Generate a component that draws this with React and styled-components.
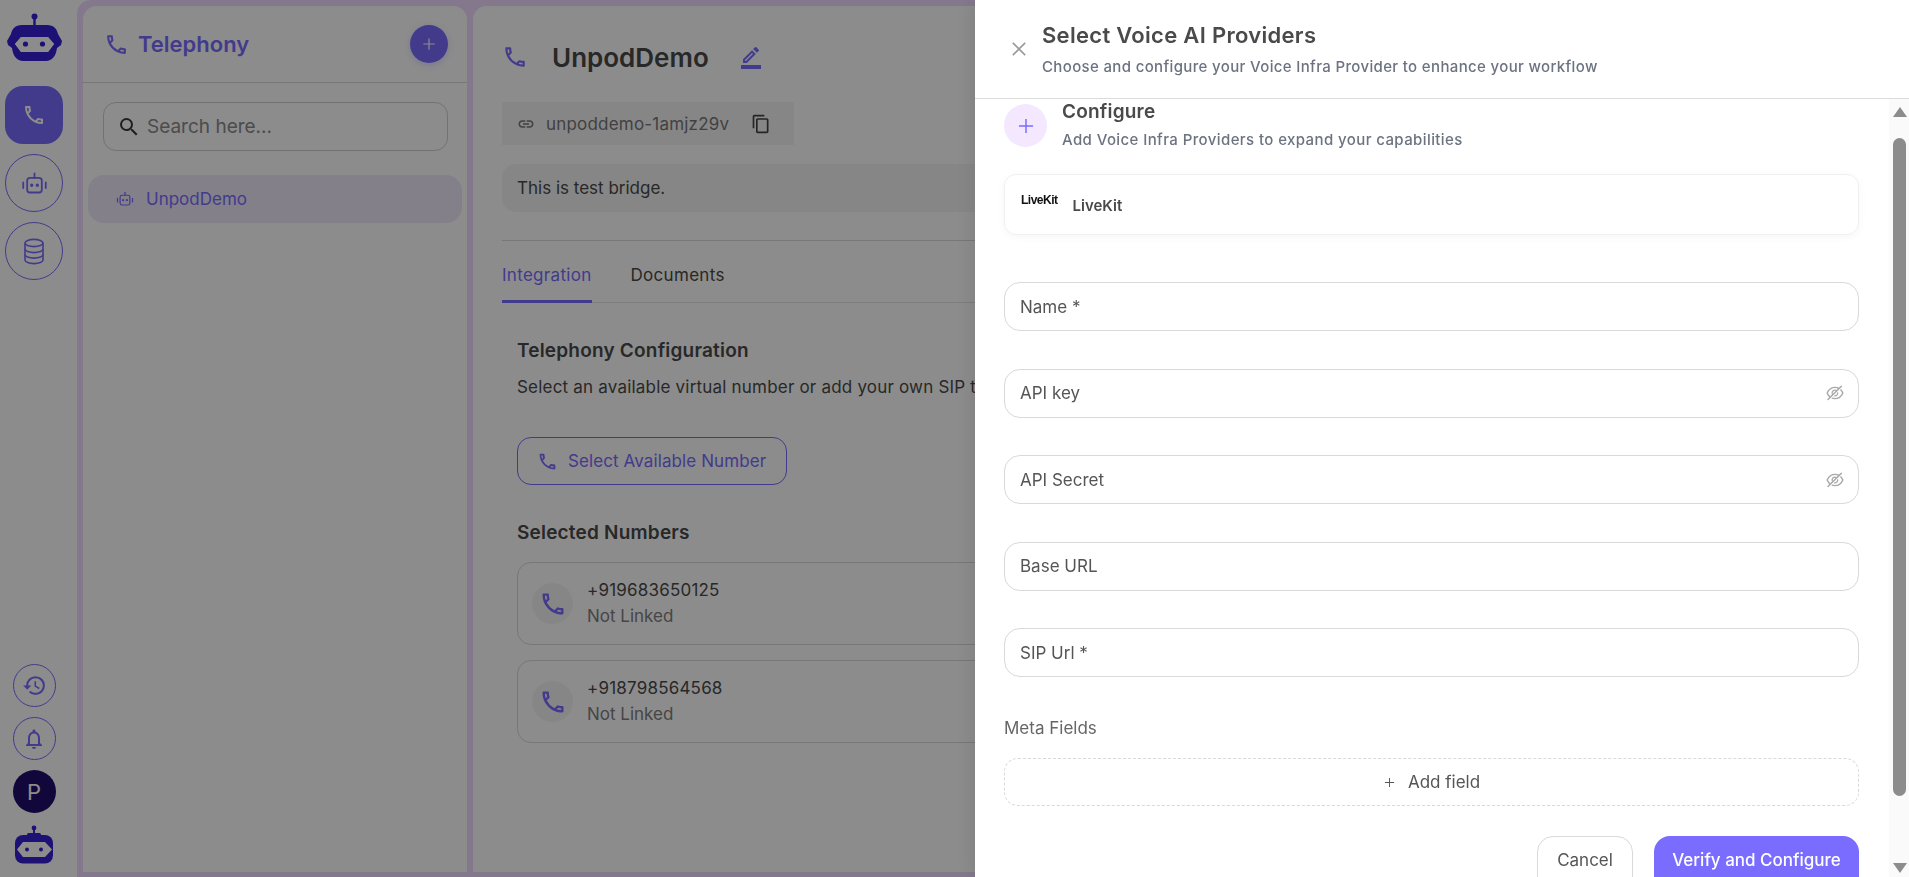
import React from 'react';
import styled, { createGlobalStyle } from 'styled-components';
import {
  MdOutlinePhone,
  MdOutlineHistory,
  MdOutlineNotifications,
  MdSearch,
  MdOutlineBorderColor,
  MdOutlineLink,
  MdOutlineContentCopy,
} from 'react-icons/md';
import { AiOutlineClose, AiOutlinePlus, AiOutlineEyeInvisible } from 'react-icons/ai';

const primary = '#796cff';
const heading = '#4a4a4a';
const logoBlue = '#3620d8';

const GlobalStyle = createGlobalStyle`
  html, body {
    margin: 0;
    height: 100%;
    overflow: hidden;
    font-family: Inter, "Noto Sans", sans-serif;
    color: ${heading};
    background: #fff;
  }
  * { box-sizing: border-box; }
`;

const Page = styled.div`
  display: flex;
  width: 1909px;
  height: 877px;
`;

const Sidebar = styled.aside`
  width: 77px;
  flex: none;
  display: flex;
  flex-direction: column;
  align-items: center;
  padding: 13px 14px 13px 5px;
`;

const NavGroup = styled.nav`
  display: flex;
  flex-direction: column;
  align-items: center;
  gap: 10px;
  margin-top: ${p => p.$top || 0}px;
`;

const BottomGroup = styled(NavGroup)`
  margin-top: auto;
`;

const NavButton = styled.button`
  width: ${p => p.$size || 58}px;
  height: ${p => p.$size || 58}px;
  padding: 0;
  display: flex;
  align-items: center;
  justify-content: center;
  color: ${p => (p.$active ? '#fff' : primary)};
  background: ${p => (p.$active ? primary : '#fff')};
  border: ${p => (p.$active ? 'none' : `1px solid ${primary}`)};
  border-radius: ${p => (p.$active ? '18px' : '50%')};
`;

const Avatar = styled.div`
  width: 43px;
  height: 43px;
  margin-bottom: 2px;
  border-radius: 50%;
  background: #220d6b;
  color: #fff;
  font-size: 22px;
  display: flex;
  align-items: center;
  justify-content: center;
`;

const Frame = styled.main`
  flex: 1;
  min-width: 0;
  display: flex;
  gap: 6px;
  padding: 6px 6px 5px;
  background: #f1dcff;
  border-top-left-radius: 14px;
`;

const ListPanel = styled.section`
  width: 384px;
  flex: none;
  background: #fff;
  border-radius: 14px 14px 0 0;
`;

const ListHeader = styled.header`
  height: 77px;
  display: flex;
  align-items: center;
  justify-content: space-between;
  padding: 0 19px 0 21px;
  border-bottom: 1px solid #d9d9d9;
`;

const ListTitle = styled.h2`
  margin: 0;
  display: flex;
  align-items: center;
  gap: 9px;
  font-size: 22px;
  font-weight: 600;
  color: ${primary};
`;

const RoundAdd = styled.button`
  width: 38px;
  height: 38px;
  padding: 0;
  border: none;
  border-radius: 50%;
  background: ${primary};
  color: #fff;
  display: flex;
  align-items: center;
  justify-content: center;
  box-shadow: 0 2px 6px rgba(121, 108, 255, 0.25);
`;

const SearchBox = styled.div`
  height: 49px;
  margin: 19px 19px 24px 20px;
  padding: 0 13px;
  display: flex;
  align-items: center;
  gap: 6px;
  border: 1px solid #cfcfcf;
  border-radius: 13px;
  color: #3a3a3a;
  font-size: 19px;
  span { color: #8a8a8a; }
`;

const ListItem = styled.div`
  height: 48px;
  margin: 0 5px;
  padding-left: 28px;
  display: flex;
  align-items: center;
  gap: 12px;
  border-radius: 16px;
  background: #efe9fb;
  color: ${primary};
  font-size: 17px;
`;

const DetailPanel = styled.section`
  flex: 1;
  min-width: 0;
  padding: 0 30px 0 29px;
  background: #fff;
  border-radius: 14px 14px 0 0;
`;

const DetailTop = styled.div`
  height: 96px;
  padding-top: 6px;
  display: flex;
  align-items: center;
  color: ${primary};
`;

const DetailName = styled.h1`
  margin: 0 30px 0 24px;
  font-size: 26px;
  font-weight: 600;
  color: ${heading};
`;

const SlugChip = styled.div`
  width: 292px;
  height: 43px;
  padding: 0 15px;
  display: flex;
  align-items: center;
  background: #f5f5f5;
  color: #777;
  font-size: 17px;
  letter-spacing: 0.2px;
  gap: 11px;
  svg:last-child { margin-left: 11px; color: #444; }
`;

const Description = styled.div`
  height: 48px;
  margin-top: 19px;
  padding-left: 15px;
  display: flex;
  align-items: center;
  border-radius: 14px;
  background: #f5f5f5;
  font-size: 17px;
`;

const Tabs = styled.div`
  margin-top: 28px;
  height: 63px;
  display: flex;
  gap: 39px;
  border-top: 1px solid #d9d9d9;
  border-bottom: 1px solid #e3e3e3;
`;

const Tab = styled.div`
  display: flex;
  align-items: center;
  font-size: 17px;
  letter-spacing: 0.3px;
  padding-top: ${p => (p.$active ? 8 : 5)}px;
  color: ${p => (p.$active ? primary : heading)};
  border-bottom: ${p => (p.$active ? `3px solid ${primary}` : 'none')};
  margin-bottom: -1px;
`;

const Section = styled.div`
  padding: 36px 0 0 15px;
`;

const SectionTitle = styled.h3`
  margin: ${p => p.$top || 0}px 0 0;
  font-size: 19px;
  line-height: 24px;
  font-weight: 600;
  letter-spacing: 0.2px;
  color: ${heading};
`;

const SectionText = styled.p`
  margin: 12px 0 0;
  font-size: 17px;
  line-height: 24px;
  letter-spacing: 0.2px;
  white-space: nowrap;
`;

const OutlineButton = styled.button`
  width: 270px;
  height: 48px;
  margin-top: 38px;
  padding: 0 0 0 19px;
  display: flex;
  align-items: center;
  gap: 10px;
  background: #fff;
  border: 1px solid ${primary};
  border-radius: 14px;
  color: ${primary};
  font: inherit;
  font-size: 17px;
  letter-spacing: 0.1px;
`;

const NumberCard = styled.div`
  height: 83px;
  margin-top: ${p => p.$top}px;
  padding-left: 14px;
  display: flex;
  align-items: center;
  gap: 14px;
  border: 1px solid #d9d9d9;
  border-radius: 14px;
`;

const NumberIcon = styled.div`
  width: 41px;
  height: 41px;
  border-radius: 50%;
  background: #f5f5f5;
  color: ${primary};
  display: flex;
  align-items: center;
  justify-content: center;
`;

const NumberValue = styled.div`
  font-size: 17px;
  line-height: 25px;
  letter-spacing: 0.2px;
`;

const NumberState = styled.div`
  font-size: 17px;
  line-height: 26px;
  color: #808080;
`;

const Overlay = styled.div`
  position: fixed;
  inset: 0;
  background: rgba(0, 0, 0, 0.45);
`;

const Drawer = styled.aside`
  position: fixed;
  top: 0;
  right: 0;
  bottom: 0;
  width: 934px;
  display: flex;
  flex-direction: column;
  background: #fff;
  box-shadow: -6px 0 16px rgba(0, 0, 0, 0.08);
`;

const DrawerHeader = styled.header`
  height: 99px;
  flex: none;
  display: flex;
  align-items: center;
  gap: 13px;
  padding: 0 0 1px 34px;
  border-bottom: 1px solid #dcdcdc;
  color: #9a9a9a;
`;

const DrawerTitle = styled.h2`
  margin: 0 0 8px;
  font-size: 22px;
  line-height: 28px;
  font-weight: 600;
  letter-spacing: 0.3px;
  color: ${heading};
`;

const DrawerSub = styled.p`
  margin: 0;
  font-size: 15px;
  line-height: 20px;
  font-weight: 500;
  letter-spacing: 0.35px;
  color: #6b7280;
`;

const DrawerBody = styled.div`
  flex: 1;
  min-height: 0;
  display: flex;
  overflow: hidden;
`;

const DrawerContent = styled.div`
  flex: 1;
  min-width: 0;
  padding: 5px 30px 0 29px;
`;

const ConfigureRow = styled.div`
  display: flex;
  gap: 15px;
  height: 43px;
`;

const AddCircle = styled.div`
  width: 43px;
  height: 43px;
  flex: none;
  border-radius: 50%;
  background: #f3e8ff;
  color: ${primary};
  display: flex;
  align-items: center;
  justify-content: center;
`;

const ConfigureTitle = styled.h3`
  margin: -4px 0 0;
  font-size: 19px;
  line-height: 24px;
  font-weight: 600;
  letter-spacing: 0.2px;
  color: ${heading};
`;

const ConfigureSub = styled.p`
  margin: 6px 0 0;
  font-size: 15px;
  line-height: 20px;
  font-weight: 500;
  letter-spacing: 0.4px;
  color: #6b7280;
`;

const ProviderCard = styled.div`
  height: 61px;
  margin-top: 27px;
  padding-left: 16px;
  display: flex;
  align-items: center;
  gap: 15px;
  border: 1px solid #f0f0f0;
  border-radius: 12px;
  box-shadow: 0 2px 8px rgba(0, 0, 0, 0.04);
`;

const ProviderLogo = styled.span`
  margin-top: -10px;
  font-family: "Liberation Sans", sans-serif;
  font-size: 12px;
  font-weight: 700;
  letter-spacing: -0.5px;
  color: #111;
`;

const ProviderName = styled.span`
  margin-top: 2px;
  font-size: 15px;
  font-weight: 600;
  color: ${heading};
`;

const Form = styled.div`
  margin-top: 47px;
  display: flex;
  flex-direction: column;
  gap: 37.5px;
`;

const Field = styled.div`
  height: 49px;
  padding: 0 13px 0 15px;
  display: flex;
  align-items: center;
  justify-content: space-between;
  border: 1px solid #d9d9d9;
  border-radius: 16px;
  font-size: 17px;
  color: #555;
  svg { color: #a8a8a8; }
`;

const MetaLabel = styled.div`
  margin-top: 40px;
  font-size: 17px;
  line-height: 22px;
  color: #666;
`;

const AddField = styled.div`
  height: 48px;
  margin-top: 19px;
  display: flex;
  align-items: center;
  justify-content: center;
  gap: 12px;
  border: 1px dashed #d9d9d9;
  border-radius: 14px;
  font-size: 17px;
  color: #555;
`;

const Footer = styled.div`
  margin-top: 30px;
  display: flex;
  justify-content: flex-end;
  gap: 21px;
`;

const FooterButton = styled.button`
  width: ${p => p.$width}px;
  height: 48px;
  padding: 0;
  font: inherit;
  font-size: 17px;
  font-weight: ${p => (p.$primary ? 500 : 400)};
  color: ${p => (p.$primary ? '#fff' : '#555')};
  background: ${p => (p.$primary ? primary : '#fff')};
  border: ${p => (p.$primary ? 'none' : '1px solid #d9d9d9')};
  border-radius: 16px 16px 0 0;
`;

const Scrollbar = styled.div`
  width: 20px;
  flex: none;
  padding: 0 3px 0 4px;
  display: flex;
  flex-direction: column;
  align-items: center;
  background: #fafafa;
`;

const ScrollArrow = styled.div`
  width: 0;
  height: 0;
  flex: none;
  margin-top: ${p => p.$top}px;
  border-left: 7px solid transparent;
  border-right: 7px solid transparent;
  border-${p => (p.$down ? 'top' : 'bottom')}: 10px solid #8c8c8c;
`;

const ScrollThumb = styled.div`
  width: 13px;
  height: 658px;
  flex: none;
  margin-top: 21px;
  border-radius: 7px;
  background: #8c8c8c;
`;

// rail logo at the top, wide head with pointed sides
const BotLogo = () => (
  <svg width="55" height="48" viewBox="0 0 55 48" fill={logoBlue}>
    <circle cx="27.5" cy="3.5" r="3" />
    <rect x="26.3" y="5" width="2.4" height="9" />
    <path fillRule="evenodd" d="M15 12h25c7 0 10 4 11 9l4 7-1 4-4 3c-1 8-5 13-11 13H16c-6 0-10-5-11-13l-4-3-1-4 4-7c1-5 4-9 11-9zM14 24l-6 7 6 8h27l6-8-6-7z" />
    <path d="M14 24h27l6 7-6 8H14l-6-8z" fill="#fff" />
    <circle cx="18.5" cy="31" r="2.6" />
    <circle cx="35.5" cy="31" r="2.6" />
  </svg>
);

// rail logo at the bottom, squarer head
const BotMark = () => (
  <svg width="38" height="39" viewBox="0 0 38 39" fill={logoBlue}>
    <circle cx="19" cy="3" r="2.4" />
    <rect x="18" y="5" width="2" height="5" />
    <rect x="12" y="8" width="14" height="3" rx="1.5" />
    <rect x="0" y="10" width="38" height="28.5" rx="8" />
    <path d="M8 17h22l7 7.5-7 7.5H8l-6-7.5z" fill="#fff" />
    <circle cx="12" cy="24.5" r="2" />
    <circle cx="26" cy="24.5" r="2" />
  </svg>
);

const RobotIcon = ({ size }) => (
  <svg width={size} height={size} viewBox="0 0 24 24" fill="none" stroke="currentColor" strokeWidth="1.6" strokeLinecap="round">
    <path d="M12 3v4" />
    <rect x="5.5" y="7" width="13" height="13" rx="2.5" />
    <path d="M2 11v5M22 11v5" />
    <circle cx="9.5" cy="13.5" r="0.7" fill="currentColor" />
    <circle cx="14.5" cy="13.5" r="0.7" fill="currentColor" />
  </svg>
);

const DatabaseIcon = () => (
  <svg width="24" height="27" viewBox="0 0 24 27" fill="none" stroke="currentColor" strokeWidth="1.6">
    <ellipse cx="12" cy="5" rx="9" ry="3.6" />
    <path d="M3 5v17c0 2 4 3.6 9 3.6s9-1.6 9-3.6V5" />
    <path d="M3 11c0 2 4 3.6 9 3.6s9-1.6 9-3.6" />
    <path d="M3 16.5c0 2 4 3.6 9 3.6s9-1.6 9-3.6" />
  </svg>
);

const NumberRow = ({ number, top }) => (
  <NumberCard $top={top}>
    <NumberIcon><MdOutlinePhone size={28} /></NumberIcon>
    <div>
      <NumberValue>{number}</NumberValue>
      <NumberState>Not Linked</NumberState>
    </div>
  </NumberCard>
);

export default function App() {
  return (
    <>
      <GlobalStyle />
      <Page>
        <Sidebar>
          <BotLogo />
          <NavGroup $top={25}>
            <NavButton $active><MdOutlinePhone size={24} /></NavButton>
            <NavButton><RobotIcon size={27} /></NavButton>
            <NavButton><DatabaseIcon /></NavButton>
          </NavGroup>
          <BottomGroup>
            <NavButton $size={43}><MdOutlineHistory size={25} /></NavButton>
            <NavButton $size={43}><MdOutlineNotifications size={24} /></NavButton>
            <Avatar>P</Avatar>
            <BotMark />
          </BottomGroup>
        </Sidebar>
        <Frame>
          <ListPanel>
            <ListHeader>
              <ListTitle><MdOutlinePhone size={25} />Telephony</ListTitle>
              <RoundAdd><AiOutlinePlus size={16} /></RoundAdd>
            </ListHeader>
            <SearchBox><MdSearch size={24} /><span>Search here...</span></SearchBox>
            <ListItem><RobotIcon size={18} />UnpodDemo</ListItem>
          </ListPanel>
          <DetailPanel>
            <DetailTop>
              <MdOutlinePhone size={26} />
              <DetailName>UnpodDemo</DetailName>
              <MdOutlineBorderColor size={24} />
            </DetailTop>
            <SlugChip>
              <MdOutlineLink size={18} />
              unpoddemo-1amjz29v
              <MdOutlineContentCopy size={20} />
            </SlugChip>
            <Description>This is test bridge.</Description>
            <Tabs>
              <Tab $active>Integration</Tab>
              <Tab>Documents</Tab>
            </Tabs>
            <Section>
              <SectionTitle>Telephony Configuration</SectionTitle>
              <SectionText>Select an available virtual number or add your own SIP trunk</SectionText>
              <OutlineButton><MdOutlinePhone size={21} />Select Available Number</OutlineButton>
              <SectionTitle $top={36}>Selected Numbers</SectionTitle>
              <NumberRow number="+919683650125" top={17} />
              <NumberRow number="+918798564568" top={15} />
            </Section>
          </DetailPanel>
        </Frame>
      </Page>
      <Overlay />
      <Drawer>
        <DrawerHeader>
          <AiOutlineClose size={20} />
          <div>
            <DrawerTitle>Select Voice AI Providers</DrawerTitle>
            <DrawerSub>Choose and configure your Voice Infra Provider to enhance your workflow</DrawerSub>
          </div>
        </DrawerHeader>
        <DrawerBody>
          <DrawerContent>
            <ConfigureRow>
              <AddCircle><AiOutlinePlus size={20} /></AddCircle>
              <div>
                <ConfigureTitle>Configure</ConfigureTitle>
                <ConfigureSub>Add Voice Infra Providers to expand your capabilities</ConfigureSub>
              </div>
            </ConfigureRow>
            <ProviderCard>
              <ProviderLogo>LiveKit</ProviderLogo>
              <ProviderName>LiveKit</ProviderName>
            </ProviderCard>
            <Form>
              <Field>Name *</Field>
              <Field>API key<AiOutlineEyeInvisible size={20} /></Field>
              <Field>API Secret<AiOutlineEyeInvisible size={20} /></Field>
              <Field>Base URL</Field>
              <Field>SIP Url *</Field>
            </Form>
            <MetaLabel>Meta Fields</MetaLabel>
            <AddField><AiOutlinePlus size={13} />Add field</AddField>
            <Footer>
              <FooterButton $width={96}>Cancel</FooterButton>
              <FooterButton $width={205} $primary>Verify and Configure</FooterButton>
            </Footer>
          </DrawerContent>
          <Scrollbar>
            <ScrollArrow $top={8} />
            <ScrollThumb />
            <ScrollArrow $down $top={67} />
          </Scrollbar>
        </DrawerBody>
      </Drawer>
    </>
  );
}
